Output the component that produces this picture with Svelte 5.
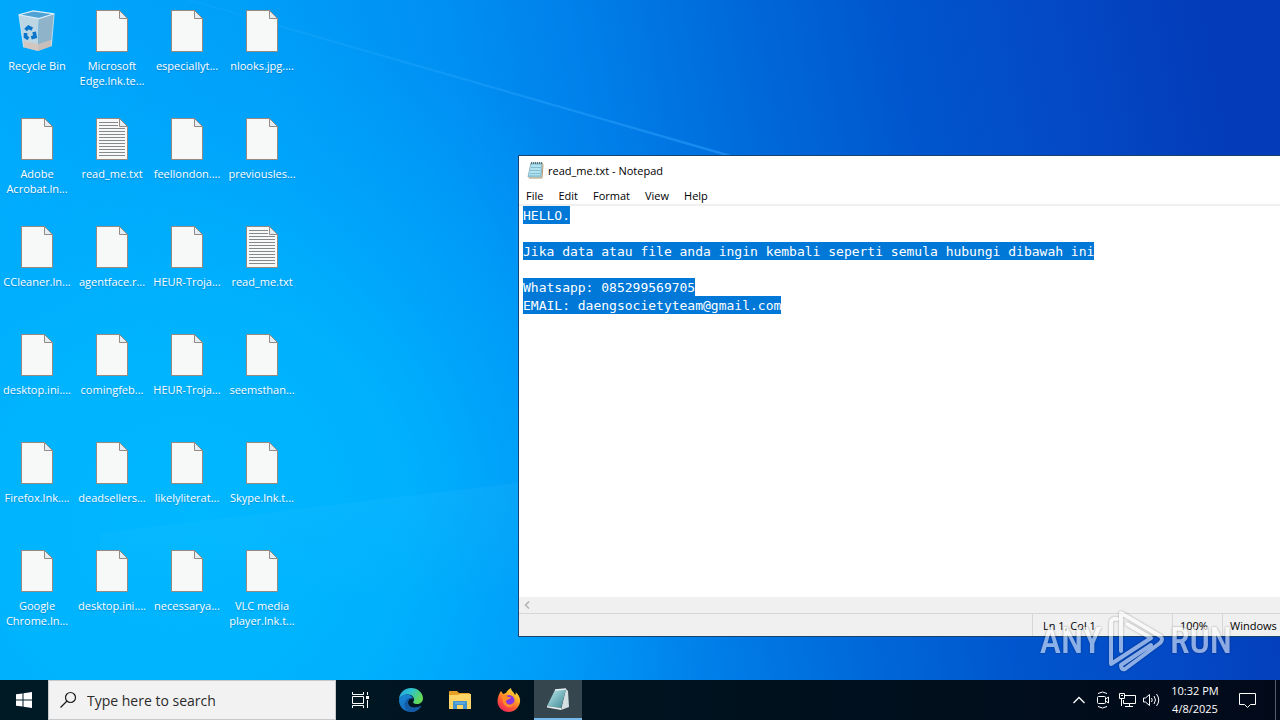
<script lang="ts">
  type DesktopItem = { name: string; kind: 'bin' | 'blank' | 'text' };

  const blank = (name: string): DesktopItem => ({ name, kind: 'blank' });

  // filled column by column, six to a column
  const items: DesktopItem[] = [
    { name: 'Recycle Bin', kind: 'bin' },
    blank('Adobe\nAcrobat.ln...'),
    blank('CCleaner.ln...'),
    blank('desktop.ini....'),
    blank('Firefox.lnk....'),
    blank('Google\nChrome.ln...'),
    blank('Microsoft\nEdge.lnk.te...'),
    { name: 'read_me.txt', kind: 'text' },
    blank('agentface.r...'),
    blank('comingfeb...'),
    blank('deadsellers...'),
    blank('desktop.ini....'),
    blank('especiallyt...'),
    blank('feellondon....'),
    blank('HEUR-Troja...'),
    blank('HEUR-Troja...'),
    blank('likelyliterat...'),
    blank('necessarya...'),
    blank('nlooks.jpg....'),
    blank('previousles...'),
    { name: 'read_me.txt', kind: 'text' },
    blank('seemsthan...'),
    blank('Skype.lnk.t...'),
    blank('VLC media\nplayer.lnk.t...')
  ];

  const menus = ['File', 'Edit', 'Format', 'View', 'Help'];
  const LINE = 18;

  let note = $state(
    'HELLO.\n\nJika data atau file anda ingin kembali seperti semula hubungi dibawah ini\n\nWhatsapp: 085299569705\nEMAIL: daengsocietyteam@gmail.com'
  );
  let query = $state('');

  // one highlight strip behind each line of the note
  let lines = $derived(note.split('\n'));
  let strips = $derived({
    image: lines.map(() => 'linear-gradient(#0078d7, #0078d7)').join(', '),
    size: lines.map((l) => `${l.length}ch ${LINE}px`).join(', '),
    position: lines.map((_, i) => `4px ${i * LINE}px`).join(', ')
  });
</script>

<div class="screen">
  <main class="desktop">
    <svg class="wallpaper" viewBox="0 0 1280 680" preserveAspectRatio="none" aria-hidden="true">
      <defs>
        <linearGradient id="sky" gradientUnits="userSpaceOnUse" x1="0" y1="440" x2="1250" y2="200">
          <stop offset="0" stop-color="#00abfc" />
          <stop offset="0.25" stop-color="#009ff8" />
          <stop offset="0.4" stop-color="#0090f3" />
          <stop offset="0.5" stop-color="#0081eb" />
          <stop offset="0.62" stop-color="#006bdb" />
          <stop offset="0.75" stop-color="#0056ce" />
          <stop offset="0.88" stop-color="#0448c5" />
          <stop offset="1" stop-color="#033bb8" />
        </linearGradient>
        <radialGradient id="glow" gradientUnits="userSpaceOnUse" cx="200" cy="520" r="520">
          <stop offset="0" stop-color="#00b8ff" />
          <stop offset="0.4" stop-color="#00b6ff" stop-opacity="0.8" />
          <stop offset="1" stop-color="#00a8ff" stop-opacity="0" />
        </radialGradient>
        <linearGradient id="ray" x1="0" y1="0" x2="1" y2="0">
          <stop offset="0" stop-color="#3fb8ff" stop-opacity="0.1" />
          <stop offset="1" stop-color="#2fa4ff" stop-opacity="0.5" />
        </linearGradient>
        <linearGradient id="floor" x1="0" y1="0" x2="0" y2="1">
          <stop offset="0" stop-color="#5ccaff" stop-opacity="0.1" />
          <stop offset="1" stop-color="#5ccaff" stop-opacity="0" />
        </linearGradient>
      </defs>
      <rect width="1280" height="680" fill="url(#sky)" />
      <rect width="1280" height="680" fill="url(#glow)" />
      <path d="M186 0 L192 0 L742 158 L733 158 Z" fill="url(#ray)" />
      <path d="M100 533 L600 473 V600 H100 Z" fill="url(#floor)" />
    </svg>

    <div class="icons">
      {#each items as item}
        <button class="item">
          {#if item.kind === 'bin'}
            <svg width="40" height="42" viewBox="0 0 40 44" aria-hidden="true">
              <path d="M1 5 L22 9 L21 43 L6 39 Z" fill="#bcd6e4" />
              <path d="M22 9 L38 4 L35 38 L21 43 Z" fill="#8fb4ca" />
              <path d="M5 32 L21 36 L36 31 L35 38 L21 43 L6 39 Z" fill="#d6c2b6" opacity="0.8" />
              <path d="M1 5 L16 1 L38 4 L22 9 Z" fill="#4fa3d4" stroke="#dff0fa" stroke-width="1.200" />
              <path d="M1 5 L6 39 M38 4 L35 38" stroke="#d8e9f2" opacity="0.8" />
              <g fill="none" stroke="#0b75cb" stroke-width="3.800">
                <path d="M8 21 L11 18 L15 20" />
                <path d="M17 23 L18 28 L14 29" />
                <path d="M11 30 L8 28 L8 24" />
              </g>
            </svg>
          {:else}
            <svg width="32" height="42" viewBox="0 0 32 42" aria-hidden="true">
              <path d="M0.500 0.500 H23.500 L31.500 8.500 V41.500 H0.500 Z" fill="#f7f8f8" stroke="#96897f" />
              <path d="M23.500 0.500 V8.500 H31.500 Z" fill="#e2edf5" stroke="#96897f" />
              {#if item.kind === 'text'}
                <path
                  d="M3 4.500 H22 M3 7.500 H22 M3 10.500 H29 M3 13.500 H29 M3 16.500 H29 M3 19.500 H29 M3 22.500 H29 M3 25.500 H29 M3 28.500 H29 M3 31.500 H29 M3 34.500 H29 M3 37.500 H29"
                  stroke="#85898b"
                />
              {/if}
            </svg>
          {/if}
          <span>{item.name}</span>
        </button>
      {/each}
    </div>

    <section class="window" aria-label="read_me.txt - Notepad">
      <header class="titlebar">
        <svg width="18" height="18" viewBox="0 0 18 18" aria-hidden="true">
          <path d="M4 2 H15 L14 16 L1 16 Z" fill="#8ccbe0" stroke="#8fb9c6" />
          <path d="M4 4 H14 L13 14 L2 14 Z" fill="#b4e2ee" />
          <path d="M4 6.500 H14 M3 9.500 H13 M3 12.500 H13" stroke="#82bed2" />
          <path d="M15 2 L16 4 L15 17 L2 17" fill="none" stroke="#b39a6d" />
          <path d="M4 2 H16" stroke="#546d77" stroke-width="2" stroke-dasharray="1 1" />
        </svg>
        <h1>read_me.txt - Notepad</h1>
      </header>
      <nav class="menubar">
        {#each menus as menu}
          <button>{menu}</button>
        {/each}
      </nav>
      <textarea
        bind:value={note}
        aria-label="Text editor"
        spellcheck="false"
        wrap="off"
        style:background-image={strips.image}
        style:background-size={strips.size}
        style:background-position={strips.position}
      ></textarea>
      <div class="scrollbar">
        <button aria-label="Scroll left">
          <svg width="6" height="8" viewBox="0 0 6 8"><path d="M5 0.500 L1.500 4 L5 7.500" fill="none" stroke="#b4b4b4" stroke-width="1.600" /></svg>
        </button>
      </div>
      <footer class="statusbar">
        <span class="caret">Ln 1, Col 1</span>
        <span class="zoom">100%</span>
        <span class="eol">Windows</span>
      </footer>
    </section>

    <div class="watermark">
      <span>ANY</span>
      <svg width="58" height="62" viewBox="0 0 58 62" aria-hidden="true">
        <g fill="none" stroke="#fff" stroke-width="4" stroke-linejoin="round" stroke-linecap="round">
          <path d="M14 41 V3 L53 26 Q57 29 53 33 L18 59 Q14 60 14 55 L44 35" />
          <path d="M10 9 Q4 8 4 13 V54 L44 28 L20 14" />
        </g>
      </svg>
      <span>RUN</span>
    </div>
  </main>

  <footer class="taskbar">
    <button class="task" aria-label="Start">
      <svg width="16" height="16" viewBox="0 0 16 16" fill="#fff">
        <path d="M0 2.300 L6.500 1.400 V7.500 H0 Z M7.500 1.200 L16 0 V7.500 H7.500 Z M0 8.500 H6.500 V14.600 L0 13.700 Z M7.500 8.500 H16 V16 L7.500 14.800 Z" />
      </svg>
    </button>
    <label class="search">
      <svg width="17" height="18" viewBox="0 0 17 18" fill="none" stroke="#1b1b1b" stroke-width="1.200">
        <circle cx="10.500" cy="6.500" r="5" />
        <path d="M7 10 L0.500 16.500" />
      </svg>
      <input type="text" aria-label="Search" placeholder="Type here to search" bind:value={query} />
    </label>
    <button class="task" aria-label="Task View">
      <svg width="17" height="16" viewBox="0 0 17 16" fill="none" stroke="#fff">
        <path d="M0.500 0 V2.500 H11.500 V0 M0.500 16 V13.500 H11.500 V16 M0.500 4.500 H11.500 V11.500 H0.500 Z M15.500 0 V3 M15.500 8 V16" />
        <path d="M14 5.500 H17" stroke-width="3" />
      </svg>
    </button>
    <div class="apps">
      <button class="task" aria-label="Microsoft Edge">
        <svg width="24" height="24" viewBox="0 0 24 24">
          <defs>
            <linearGradient id="edgeTop" x1="0" y1="0" x2="1" y2="0.4">
              <stop offset="0" stop-color="#249fe0" />
              <stop offset="0.5" stop-color="#2cc3cf" />
              <stop offset="1" stop-color="#62d957" />
            </linearGradient>
            <linearGradient id="edgeBase" x1="0" y1="0" x2="0.6" y2="1">
              <stop offset="0" stop-color="#1a8ad8" />
              <stop offset="1" stop-color="#1165b4" />
            </linearGradient>
          </defs>
          <path d="M0 12 C0 5 5 0 12 0 C19 0 24 5 24 10.500 C24 14 21 16 18 16 C15 16 13.500 15 14.500 13.500 C16.500 10 13 6.500 9 6.500 C5 6.500 1 8 0 12 Z" fill="url(#edgeTop)" />
          <path d="M0 12 C1 8 5 6 9 6.500 C12 7 14 9 14 11 C11 9 9 12 9 14.500 C9 19 14 21.500 22 18 C20 22 16 24 12 24 C5 24 0 19 0 12 Z" fill="url(#edgeBase)" />
          <path d="M9 14.500 C9 19 14 21.500 22 18 C20 22 16 24 12 24 C7 23 5 18 6 14.500 C7 11.500 9.500 10 12 10 C10 11 9 12.500 9 14.500 Z" fill="#155aa5" />
        </svg>
      </button>
      <button class="task" aria-label="File Explorer">
        <svg width="22" height="19" viewBox="0 0 22 19">
          <path d="M0 1 Q0 0 1 0 H8 L10 2 H20 Q21 2 21 3 V6 H0 Z" fill="#e6a126" />
          <path d="M0 4 H9 L11 3 H22 V18 H0 Z" fill="#fdd567" />
          <path d="M4 18 V11 Q4 10 5 10 H17 Q18 10 18 11 V18 H14 V14 H8 V18 Z" fill="#4393cf" />
          <path d="M6 12 H16" stroke="#7cbce8" />
        </svg>
      </button>
      <button class="task" aria-label="Firefox">
        <svg width="24" height="24" viewBox="0 0 24 24">
          <defs>
            <linearGradient id="fox" x1="0.8" y1="0" x2="0.2" y2="1">
              <stop offset="0" stop-color="#ffe14a" />
              <stop offset="0.35" stop-color="#ffac24" />
              <stop offset="0.65" stop-color="#ff5a36" />
              <stop offset="1" stop-color="#e9235f" />
            </linearGradient>
          </defs>
          <path d="M4 3 L6 6 L9 5 C10 3 12 1 14 0 C14 3 17 4 18 7 C19 6 19 5 18.500 4 C22 7 23.500 10 23 14 C22 20 17 24 12 24 C5 24 0.500 19 0.500 13 C0.500 9 2 6 4 3 Z" fill="url(#fox)" />
          <circle cx="12" cy="12.500" r="5.500" fill="#8a37e0" />
          <path d="M5 8 C8 6 10 8 11 9 H14 C13 12 10 11 9 13 C9 17 14 18 17 14 C17 18 14 20 11 19 C7 18 5 14 5 8 Z" fill="#ff8a2a" />
        </svg>
      </button>
      <button class="task active" aria-label="Notepad">
        <svg width="24" height="24" viewBox="0 0 24 24">
          <defs>
            <linearGradient id="pad" x1="0" y1="0" x2="1" y2="1">
              <stop offset="0" stop-color="#c9ecef" />
              <stop offset="0.5" stop-color="#7dbac1" />
              <stop offset="1" stop-color="#3f858f" />
            </linearGradient>
          </defs>
          <path d="M20 2 L22 4 L23 20 L15 23 Z" fill="#d3dfe0" />
          <path d="M9 3 L20 2 L15 21 L1 19 Z" fill="url(#pad)" />
          <path d="M1 19 L15 21 V23 L1 20.500 Z" fill="#e4eceb" />
          <path d="M9 3 L20 2" stroke="#e9f1f2" stroke-width="1.500" />
        </svg>
      </button>
    </div>

    <div class="tray">
      <button aria-label="Show hidden icons">
        <svg width="12" height="8" viewBox="0 0 12 8"><path d="M0.500 7 L6 1.500 L11.500 7" stroke-width="1.300" /></svg>
      </button>
      <button aria-label="Meet Now">
        <svg width="14" height="18" viewBox="0 0 14 18">
          <path d="M2 2.500 Q6.500 -0.500 11 2.500 M2 15.500 Q6.500 18.500 11 15.500" />
          <rect x="1.500" y="5.500" width="8" height="7" rx="1" />
          <path d="M9.500 8 L12.500 6 V12 L9.500 10" />
        </svg>
      </button>
      <button aria-label="Network">
        <svg width="17" height="15" viewBox="0 0 17 15">
          <path d="M6 2.500 H16.500 V10.500 H4.500 V7 M10.500 10.500 V13.500 M6 13.500 H14 M2.500 5 V13" />
          <path d="M0.500 0.500 H5.500 V5.500 H0.500 Z M2 2.500 H4" />
        </svg>
      </button>
      <button aria-label="Volume">
        <svg width="17" height="14" viewBox="0 0 17 14">
          <path d="M0.500 5 H2.500 L6.500 1.500 V12.500 L2.500 9 H0.500 Z" />
          <path d="M8.500 5 Q10 7 8.500 9 M11 3 Q14 7 11 11 M13.500 1 Q18 7 13.500 13" />
        </svg>
      </button>
      <button class="clock">
        <time>10:32 PM</time>
        <time>4/8/2025</time>
      </button>
      <button class="action" aria-label="Notifications">
        <svg width="17" height="17" viewBox="0 0 17 17"><path d="M0.500 1.500 H16.500 V12.500 H11.500 L8.500 15.500 L5.500 12.500 H0.500 Z" /></svg>
      </button>
      <button class="peek" aria-label="Show desktop"></button>
    </div>
  </footer>
</div>

<style>
  :global(body) {
    margin: 0;
  }

  .screen {
    display: flex;
    flex-direction: column;
    height: 100vh;
    overflow: hidden;
    font-family: 'Open Sans', 'Noto Sans', sans-serif;
    font-size: 11px;
  }

  button {
    padding: 0;
    border: 0;
    background: none;
    color: inherit;
    font: inherit;
  }

  .desktop {
    position: relative;
    flex: 1;
    min-height: 0;
    overflow: hidden;
  }

  .wallpaper {
    position: absolute;
    inset: 0;
    width: 100%;
    height: 100%;
  }

  .icons {
    position: relative;
    display: grid;
    grid-auto-flow: column;
    grid-template-rows: repeat(6, 108px);
    grid-auto-columns: 74px;
    column-gap: 1px;
  }

  .item {
    display: flex;
    flex-direction: column;
    align-items: center;
    gap: 6px;
    padding-top: 10px;
    color: #fff;
    line-height: 15px;
    white-space: pre;
    text-shadow: 0 1px 1px rgba(0, 50, 110, 0.3);
  }

  .window {
    position: absolute;
    top: 155px;
    left: 518px;
    right: 0;
    display: flex;
    flex-direction: column;
    height: 480px;
    border: 1px solid #17436f;
    border-right: 0;
    background: #fff;
    color: #000;
  }

  .titlebar {
    box-sizing: border-box;
    display: flex;
    align-items: center;
    gap: 3px;
    height: 30px;
    padding: 0 0 2px 8px;
  }

  h1 {
    margin: 0;
    font-size: 11px;
    font-weight: 400;
  }

  .menubar {
    display: flex;
    gap: 15px;
    height: 18px;
    padding-left: 7px;
    border-bottom: 2px solid #f0f0f0;
    line-height: 20px;
  }

  textarea {
    flex: 1;
    min-height: 0;
    padding: 1px 4px 0;
    border: 0;
    outline: 0;
    resize: none;
    overflow: hidden;
    background-color: #fff;
    background-repeat: no-repeat;
    color: #fff;
    font-family: 'DejaVu Sans Mono', 'Liberation Mono', monospace;
    font-size: 13px;
    line-height: 18px;
  }

  .scrollbar {
    display: flex;
    height: 16px;
    padding-left: 5px;
    background: #f0f0f0;
  }

  .scrollbar button {
    display: flex;
    align-items: center;
  }

  .statusbar {
    display: flex;
    justify-content: flex-end;
    height: 22px;
    border-top: 1px solid #d7d7d7;
    background: #f0f0f0;
    line-height: 24px;
  }

  .statusbar span {
    box-sizing: border-box;
    padding-left: 7px;
    border-left: 1px solid #d7d7d7;
  }

  .statusbar .caret {
    width: 140px;
    padding-left: 10px;
  }

  .statusbar .zoom {
    width: 50px;
  }

  .statusbar .eol {
    width: 58px;
  }

  .watermark {
    position: absolute;
    right: 48px;
    bottom: 8px;
    display: flex;
    align-items: center;
    gap: 5px;
    color: #fff;
    font-family: 'Liberation Sans Narrow', 'Roboto Condensed', Roboto, sans-serif;
    font-size: 36px;
    font-weight: 500;
    line-height: 48px;
    opacity: 0.55;
    filter: drop-shadow(0 0 1px rgba(0, 0, 0, 0.6));
    pointer-events: none;
  }

  .taskbar {
    display: flex;
    height: 40px;
    background: linear-gradient(90deg, #001a25, #00131f 50%, #020a1a);
    color: #fff;
  }

  .task {
    display: flex;
    align-items: center;
    justify-content: center;
    width: 48px;
  }

  .task.active {
    box-sizing: border-box;
    border-bottom: 2px solid #76b9ed;
    background: #35464f;
  }

  .search {
    box-sizing: border-box;
    display: flex;
    align-items: center;
    gap: 10px;
    width: 288px;
    padding: 0 11px;
    border: 1px solid #c4c8ca;
    background: #f2f2f2;
  }

  .search input {
    flex: 1;
    min-width: 0;
    padding: 0;
    border: 0;
    outline: 0;
    background: none;
    color: #111;
    font: inherit;
    font-size: 14px;
  }

  .search input::placeholder {
    color: #2b2b2b;
    opacity: 1;
  }

  .apps {
    display: flex;
    gap: 1px;
    margin-left: 3px;
  }

  .tray {
    display: flex;
    margin-left: auto;
  }

  .tray button {
    display: flex;
    align-items: center;
    justify-content: center;
    width: 24px;
  }

  .tray svg {
    fill: none;
    stroke: #fff;
  }

  .tray .clock {
    flex-direction: column;
    width: 64px;
    line-height: 18px;
  }

  .tray .action {
    width: 40px;
  }

  .tray .peek {
    width: 5px;
    margin-left: 8px;
    border-left: 1px solid #56606b;
  }
</style>
